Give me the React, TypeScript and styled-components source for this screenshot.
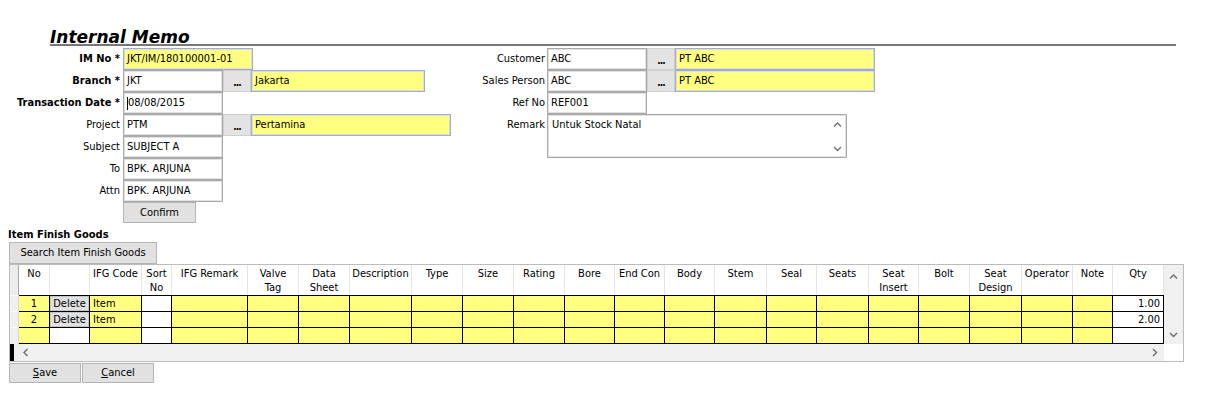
import React from "react";
import styled, { createGlobalStyle } from "styled-components";

const GlobalStyle = createGlobalStyle`
  html, body {
    margin: 0;
    padding: 0;
    background: #ffffff;
  }
  body {
    font-family: "DejaVu Sans Condensed", "DejaVu Sans", sans-serif;
    font-size: 11px;
    color: #000000;
  }
`;

const YELLOW = "#ffff80";

const Page = styled.div`
  width: 1225px;
  height: 400px;
  overflow: hidden;
`;

const TitleBar = styled.div`
  margin-left: 50px;
  width: 1126px;
  height: 46px;
  box-sizing: border-box;
  border-bottom: 2px solid #777777;
  display: flex;
  align-items: flex-end;
`;

const Title = styled.h1`
  margin: 0;
  font-family: "DejaVu Sans", sans-serif;
  font-size: 17px;
  font-weight: bold;
  font-style: italic;
  line-height: 14px;
`;

const FormArea = styled.div`
  display: flex;
  margin-top: 2px;
`;

const Panel = styled.div<{ $width?: number }>`
  display: flex;
  flex-direction: column;
  width: ${(p) => (p.$width ? `${p.$width}px` : "auto")};
`;

const FormRow = styled.div<{ $height?: number }>`
  display: flex;
  height: ${(p) => p.$height || 22}px;
`;

const Label = styled.div<{ $width: number; $required?: boolean; $gap: number }>`
  width: ${(p) => p.$width}px;
  box-sizing: border-box;
  padding-right: ${(p) => p.$gap}px;
  text-align: right;
  line-height: 22px;
  white-space: nowrap;
  font-weight: ${(p) => (p.$required ? "bold" : "normal")};
`;

const Field = styled.div<{ $width: number; $lookup?: boolean }>`
  width: ${(p) => p.$width}px;
  height: 22px;
  box-sizing: border-box;
  border: 1px solid ${(p) => (p.$lookup ? "#a3adbf" : "#a9a9a9")};
  box-shadow: inset 0 0 0 1px ${(p) => (p.$lookup ? "#d9dde6" : "#e2e2e2")};
  background: ${(p) => (p.$lookup ? YELLOW : "#ffffff")};
  padding: 0 3px;
  line-height: 20px;
  white-space: nowrap;
  overflow: hidden;
  display: flex;
  align-items: center;
`;

const Caret = styled.span`
  display: inline-block;
  width: 1px;
  height: 13px;
  background: #000000;
  margin-right: 0px;
`;

const DotsButton = styled.div`
  width: 28px;
  height: 22px;
  box-sizing: border-box;
  background: #e3e3e3;
  border: 1px solid #cfcfcf;
  text-align: center;
  font-weight: bold;
  font-size: 10px;
  line-height: 24px;
  letter-spacing: -1px;
`;

const TextBox = styled.div`
  width: 300px;
  height: 44px;
  box-sizing: border-box;
  border: 1px solid #a9a9a9;
  box-shadow: inset 0 0 0 1px #e2e2e2;
  display: flex;
`;

const TextBoxContent = styled.div`
  flex: 1;
  padding: 2px 4px;
  line-height: 16px;
`;

const TextScroll = styled.div`
  width: 17px;
  display: flex;
  flex-direction: column;
  justify-content: space-between;
  align-items: center;
  padding: 6px 0 4px;
`;

const Button = styled.div<{ $width: number; $height?: number }>`
  width: ${(p) => p.$width}px;
  height: ${(p) => p.$height || 21}px;
  box-sizing: border-box;
  background: #e1e1e1;
  border: 1px solid #b4b4b4;
  text-align: center;
  line-height: ${(p) => (p.$height || 21) - 2}px;
  white-space: nowrap;
`;

const ConfirmRow = styled.div`
  padding-left: 123px;
`;

const SectionTitle = styled.div`
  margin: 5px 0 0 8px;
  font-weight: bold;
  line-height: 13px;
`;

const SearchRow = styled.div`
  margin: 1px 0 0 9px;
`;

const Grid = styled.div`
  margin-left: 9px;
  width: 1175px;
  box-sizing: border-box;
  border: 1px solid #bcbcbc;
  display: grid;
  grid-template-columns: 1154px 19px;
  grid-template-rows: 79px 17px;
`;

const Table = styled.div`
  display: flex;
  flex-direction: column;
`;

const COLS = [9, 31, 40, 52, 30, 76, 51, 51, 62, 51, 51, 51, 50, 50, 50, 52, 50, 52, 50, 51, 52, 51, 40, 51];
const TEMPLATE = COLS.map((c) => `${c}px`).join(" ");

const HeaderRow = styled.div`
  display: grid;
  grid-template-columns: ${TEMPLATE};
  height: 30px;
  background: #ffffff;
`;

const HeaderCell = styled.div<{ $corner?: boolean }>`
  box-sizing: border-box;
  border-right: 1px solid ${(p) => (p.$corner ? "#a8a8a8" : "#e4e4e4")};
  background: ${(p) => (p.$corner ? "#ececec" : "#ffffff")};
  text-align: center;
  padding-top: 2px;
  line-height: 14px;
  white-space: pre-line;
  overflow: hidden;
`;

const DataRow = styled.div<{ $last?: boolean }>`
  display: grid;
  grid-template-columns: ${TEMPLATE};
  height: ${(p) => (p.$last ? 17 : 16)}px;
`;

const RowHeadCell = styled.div`
  background: #f0f0f0;
  border-right: 1px solid #d6d6d6;
  border-top: 1px solid #fbfbfb;
  box-sizing: border-box;
`;

type CellKind = "yellow" | "white" | "button";

const DataCell = styled.div<{ $kind: CellKind; $align?: string; $last?: boolean }>`
  box-sizing: border-box;
  border-top: 1px solid #000000;
  border-right: 1px solid #000000;
  border-bottom: ${(p) => (p.$last ? "1px solid #000000" : "none")};
  background: ${(p) => (p.$kind === "yellow" ? YELLOW : p.$kind === "button" ? "#e1e1e1" : "#ffffff")};
  box-shadow: ${(p) => (p.$kind === "button" ? "inset 0 0 0 1px #c4c4c4" : "none")};
  text-align: ${(p) => p.$align || "left"};
  padding: 0 ${(p) => (p.$align === "center" ? 0 : 3)}px;
  line-height: 15px;
  white-space: nowrap;
  overflow: hidden;
`;

const VScroll = styled.div`
  grid-row: 1;
  grid-column: 2;
  background: #f0f0f0;
  display: flex;
  flex-direction: column;
  justify-content: space-between;
  align-items: center;
  padding: 8px 0 5px;
  box-sizing: border-box;
`;

const HScroll = styled.div`
  grid-row: 2;
  grid-column: 1;
  background: #f0f0f0;
  border-left: 4px solid #000000;
  display: flex;
  justify-content: space-between;
  align-items: center;
  padding: 0 5px 0 8px;
`;

const Corner = styled.div`
  grid-row: 2;
  grid-column: 2;
  background: #ffffff;
`;

const ActionRow = styled.div`
  display: flex;
  gap: 1px;
  margin: 1px 0 0 9px;
`;

const Key = styled.span`
  text-decoration: underline;
`;

const Chevron = ({ dir }: { dir: "up" | "down" | "left" | "right" }) => {
  const pts: Record<string, string> = {
    up: "1,5.5 4.5,2 8,5.5",
    down: "1,2 4.5,5.5 8,2",
    left: "5.5,1 2,4.5 5.5,8",
    right: "2,1 5.5,4.5 2,8",
  };
  const horizontal = dir === "left" || dir === "right";
  return (
    <svg width={horizontal ? 8 : 9} height={horizontal ? 9 : 8} viewBox={horizontal ? "0 0 8 9" : "0 0 9 8"}>
      <polyline points={pts[dir]} fill="none" stroke="#6d6d6d" strokeWidth="1.4" />
    </svg>
  );
};

const headers = [
  "", "No", "", "IFG Code", "Sort\nNo", "IFG Remark", "Valve\nTag", "Data\nSheet", "Description",
  "Type", "Size", "Rating", "Bore", "End Con", "Body", "Stem", "Seal", "Seats", "Seat\nInsert",
  "Bolt", "Seat\nDesign", "Operator", "Note", "Qty",
];

type Item = { no: string; del: boolean; code: string; qty: string };
const items: Item[] = [
  { no: "1", del: true, code: "Item", qty: "1.00" },
  { no: "2", del: true, code: "Item", qty: "2.00" },
  { no: "", del: false, code: "", qty: "" },
];

const App = () => {
  return (
    <Page>
      <GlobalStyle />
      <TitleBar>
        <Title>Internal Memo</Title>
      </TitleBar>
      <FormArea>
        <Panel $width={460}>
          <FormRow>
            <Label $width={123} $gap={3} $required>IM No *</Label>
            <Field $width={130} $lookup>JKT/IM/180100001-01</Field>
          </FormRow>
          <FormRow>
            <Label $width={123} $gap={3} $required>Branch *</Label>
            <Field $width={100}>JKT</Field>
            <DotsButton>...</DotsButton>
            <Field $width={174} $lookup>Jakarta</Field>
          </FormRow>
          <FormRow>
            <Label $width={123} $gap={3} $required>Transaction Date *</Label>
            <Field $width={100}><Caret />08/08/2015</Field>
          </FormRow>
          <FormRow>
            <Label $width={123} $gap={3}>Project</Label>
            <Field $width={100}>PTM</Field>
            <DotsButton>...</DotsButton>
            <Field $width={200} $lookup>Pertamina</Field>
          </FormRow>
          <FormRow>
            <Label $width={123} $gap={3}>Subject</Label>
            <Field $width={100}>SUBJECT A</Field>
          </FormRow>
          <FormRow>
            <Label $width={123} $gap={3}>To</Label>
            <Field $width={100}>BPK. ARJUNA</Field>
          </FormRow>
          <FormRow>
            <Label $width={123} $gap={3}>Attn</Label>
            <Field $width={100}>BPK. ARJUNA</Field>
          </FormRow>
          <ConfirmRow>
            <Button $width={73}>Confirm</Button>
          </ConfirmRow>
        </Panel>
        <Panel>
          <FormRow>
            <Label $width={87} $gap={2}>Customer</Label>
            <Field $width={100}>ABC</Field>
            <DotsButton>...</DotsButton>
            <Field $width={200} $lookup>PT ABC</Field>
          </FormRow>
          <FormRow>
            <Label $width={87} $gap={2}>Sales Person</Label>
            <Field $width={100}>ABC</Field>
            <DotsButton>...</DotsButton>
            <Field $width={200} $lookup>PT ABC</Field>
          </FormRow>
          <FormRow>
            <Label $width={87} $gap={2}>Ref No</Label>
            <Field $width={100}>REF001</Field>
          </FormRow>
          <FormRow $height={44}>
            <Label $width={87} $gap={2}>Remark</Label>
            <TextBox>
              <TextBoxContent>Untuk Stock Natal</TextBoxContent>
              <TextScroll>
                <Chevron dir="up" />
                <Chevron dir="down" />
              </TextScroll>
            </TextBox>
          </FormRow>
        </Panel>
      </FormArea>

      <SectionTitle>Item Finish Goods</SectionTitle>
      <SearchRow>
        <Button $width={148} $height={22}>Search Item Finish Goods</Button>
      </SearchRow>

      <Grid>
        <Table>
          <HeaderRow>
            {headers.map((h, i) => (
              <HeaderCell key={i} $corner={i === 0}>{h}</HeaderCell>
            ))}
          </HeaderRow>
          {items.map((it, r) => {
            const last = r === items.length - 1;
            return (
              <DataRow key={r} $last={last}>
                <RowHeadCell />
                <DataCell $kind="yellow" $align="center" $last={last}>{it.no}</DataCell>
                <DataCell $kind={it.del ? "button" : "white"} $align="center" $last={last}>
                  {it.del ? "Delete" : ""}
                </DataCell>
                <DataCell $kind="yellow" $last={last}>{it.code}</DataCell>
                <DataCell $kind="white" $last={last} />
                {headers.slice(5, 23).map((_, c) => (
                  <DataCell key={c} $kind="yellow" $last={last} />
                ))}
                <DataCell $kind="white" $align="right" $last={last}>{it.qty}</DataCell>
              </DataRow>
            );
          })}
        </Table>
        <VScroll>
          <Chevron dir="up" />
          <Chevron dir="down" />
        </VScroll>
        <HScroll>
          <Chevron dir="left" />
          <Chevron dir="right" />
        </HScroll>
        <Corner />
      </Grid>

      <ActionRow>
        <Button $width={72} $height={20}><Key>S</Key>ave</Button>
        <Button $width={72} $height={20}><Key>C</Key>ancel</Button>
      </ActionRow>
    </Page>
  );
};

export default App;
